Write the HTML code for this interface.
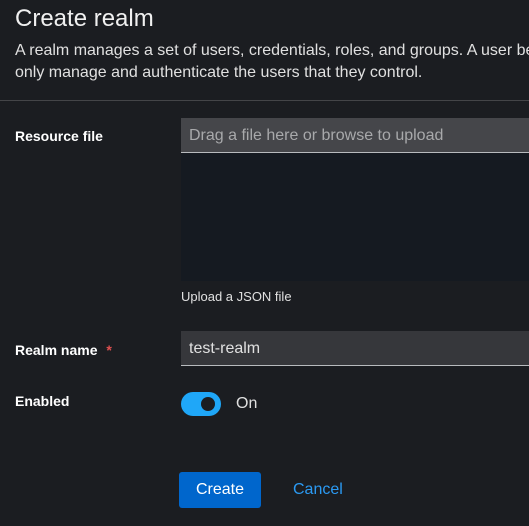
<!DOCTYPE html>
<html><head><style>
html,body{margin:0;padding:0}
body{width:529px;height:526px;background:#1b1d21;font-family:"Liberation Sans",sans-serif;color:#e0e0e0;overflow:hidden}
.w{position:relative;width:529px;height:526px;overflow:hidden}
.a{position:absolute;white-space:nowrap}
</style></head><body><div class="w">
<div class="a" style="left:15px;top:5px;font-size:24px;color:#f0f0f0">Create realm</div>
<div class="a" style="left:15px;top:40px;width:514px;overflow:hidden;font-size:16px;line-height:22px;color:#e0e0e0">A realm manages a set of users, credentials, roles, and groups. A user belongs to<br>only manage and authenticate the users that they control.</div>
<div class="a" style="left:0;top:100px;width:529px;height:1px;background:#444548"></div>
<div class="a" style="left:15px;top:128px;font-size:14px;font-weight:bold;color:#fff">Resource file</div>
<div class="a" style="left:181px;top:118px;width:348px;height:34px;background:#45464a;border-bottom:1px solid #b8bbbe"></div>
<div class="a" style="left:189px;top:127px;font-size:16px;color:#a8a9ab">Drag a file here or browse to upload</div>
<div class="a" style="left:181px;top:153px;width:348px;height:128px;background:#151a21"></div>
<div class="a" style="left:181px;top:289px;font-size:13px;color:#e0e0e0">Upload a JSON file</div>
<div class="a" style="left:15px;top:342px;font-size:14px;font-weight:bold;color:#fff">Realm name <span style="color:#e05050;margin-left:5px">*</span></div>
<div class="a" style="left:181px;top:331px;width:348px;height:34px;background:#36373b;border-bottom:1px solid #b8bbbe"></div>
<div class="a" style="left:189px;top:340px;font-size:16px;color:#e0e0e0">test-realm</div>
<div class="a" style="left:15px;top:393px;font-size:14px;font-weight:bold;color:#fff">Enabled</div>
<div class="a" style="left:181px;top:392px;width:40px;height:24px;border-radius:12px;background:#1fa7f8"></div>
<div class="a" style="left:201px;top:397px;width:14px;height:14px;border-radius:50%;background:#1b1d21"></div>
<div class="a" style="left:236px;top:395px;font-size:16px;color:#e0e0e0">On</div>
<div class="a" style="left:179px;top:472px;width:82px;height:36px;border-radius:3px;background:#0066cc"></div>
<div class="a" style="left:179px;top:481px;width:82px;text-align:center;font-size:16px;color:#fff">Create</div>
<div class="a" style="left:293px;top:481px;font-size:16px;color:#2b9af3">Cancel</div>
</div></body></html>
